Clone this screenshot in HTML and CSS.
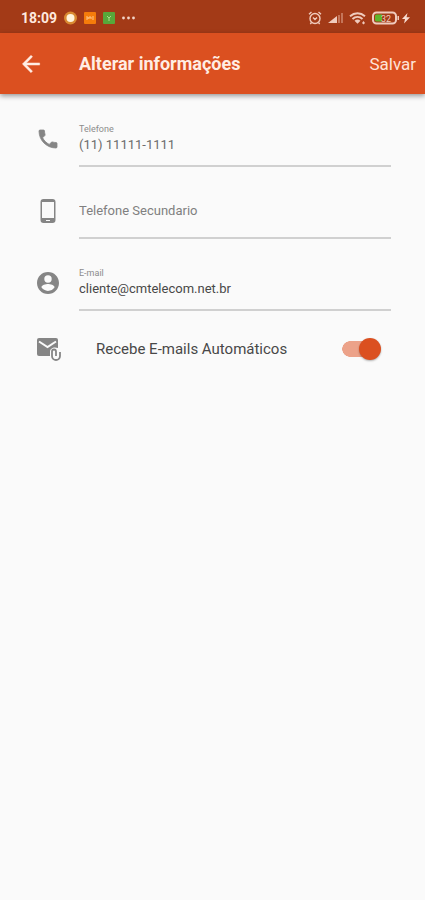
FILE: index.html
```html
<!DOCTYPE html>
<html lang="pt-BR">
<head>
<meta charset="utf-8">
<meta name="viewport" content="width=device-width, initial-scale=1">
<title>Alterar informações</title>
<link rel="stylesheet" href="styles.css">
</head>
<body>
<div class="status">
  <div class="status-group">
    <span class="clock">18:09</span>
    <svg width="13" height="14" viewBox="0 0 13 14"><circle cx="6.500" cy="7" r="6.500" fill="#d98a32"/><circle cx="6.500" cy="7" r="4" fill="#fff3dc"/></svg>
    <svg width="12" height="12" viewBox="0 0 12 12"><rect width="12" height="12" rx="1" fill="#f57c0a"/><path d="M2 5h2v2H2M5 7V5h2v2M8 5h2M8 7h2" fill="none" stroke="#ffc58a"/></svg>
    <svg width="12" height="12" viewBox="0 0 12 12"><rect width="12" height="12" rx="1" fill="#57a83a"/><path d="M4 4l2 2 2-2M6 6v3" fill="none" stroke="#a9dc8c"/></svg>
    <svg width="16" height="12" viewBox="0 0 16 12" fill="#f3d5c9"><circle cx="1.500" cy="6" r="1.400"/><circle cx="6.500" cy="6" r="1.400"/><circle cx="11.500" cy="6" r="1.400"/></svg>
  </div>
  <div class="status-group status-right">
    <svg width="14" height="14" viewBox="0 0 14 14" fill="none" stroke="#f0cbbd" stroke-width="1.400"><circle cx="7" cy="7.500" r="5"/><path d="M1 3.200L3.500 1M13 3.200L10.500 1M5 6.500l2 2 2-2M3.500 11.500l-1.200 1.500M10.500 11.500l1.200 1.500"/></svg>
    <svg width="17" height="14" viewBox="0 0 17 14"><path d="M1 12l9-7v7z" fill="#f0cbbd"/><path d="M11 12V4h2v8zM14 12V2h2v10z" fill="#c57559"/></svg>
    <svg width="18" height="14" viewBox="0 0 18 14" fill="none" stroke="#f0cbbd" stroke-width="2"><path d="M1 5.200c4.500-4 10.500-4 15 0M3.500 7.900c3-2.700 7-2.700 10 0"/><path d="M5.500 9.700c2-1.600 4-1.600 6 0l-3 3z" fill="#f0cbbd" stroke="none"/><path d="M13 12l1.500-2 1.500 2-1.500 1.500z" fill="#f0cbbd" stroke="none"/></svg>
    <svg width="28" height="14" viewBox="0 0 28 14"><rect x="1" y="1.500" width="23" height="11" rx="3.500" fill="#a33a17" stroke="#f0cbbd" stroke-width="2"/><path d="M4.500 3.500H10v7H4.500a1.500 1.500 0 0 1-1.500-1.500V5a1.500 1.500 0 0 1 1.500-1.500z" fill="#5fb52b"/><path d="M25.500 5h1.500v4h-1.500z" fill="#f0cbbd"/><text x="9" y="10.500" class="battery-text">32</text></svg>
    <svg class="bolt" width="10" height="14" viewBox="0 0 10 14"><path d="M6.500 2L1 8h3L3 12.500 9 6.200H5.500z" fill="#f8ddd2"/></svg>
  </div>
</div>
<header class="appbar">
  <button class="back" type="button" aria-label="Voltar">
    <svg width="26" height="26" viewBox="0 0 24 24" fill="#ffede4" stroke="#ffede4" stroke-width=".4"><path d="M20 11H7.830l5.590-5.590L12 4l-8 8 8 8 1.410-1.410L7.830 13H20v-2z"/></svg>
  </button>
  <h1>Alterar informações</h1>
  <button class="save" type="submit" form="info">Salvar</button>
</header>
<main>
  <form id="info">
    <div class="row">
      <svg class="icon" viewBox="0 0 24 24"><path d="M6.620 10.790c1.440 2.830 3.760 5.140 6.590 6.590l2.200-2.200c.27-.27.67-.36 1.020-.24 1.120.37 2.330.57 3.570.57.55 0 1 .45 1 1V20c0 .55-.45 1-1 1-9.390 0-17-7.610-17-17 0-.55.45-1 1-1h3.500c.55 0 1 .45 1 1 0 1.250.2 2.450.57 3.570.11.35.03.74-.25 1.020l-2.200 2.200z" stroke="#858585" stroke-width=".8"/></svg>
      <div class="field">
        <label for="tel">Telefone</label>
        <input class="muted" id="tel" type="tel" value="(11) 11111-1111">
      </div>
    </div>
    <div class="row">
      <svg class="icon" viewBox="0 0 24 24"><path d="M16.500 0h-9A3 3 0 0 0 4.500 3v18a3 3 0 0 0 3 3h9a3 3 0 0 0 3-3V3a3 3 0 0 0-3-3zM14 22h-4v-1h4v1zm4-3H6V3h12v16z"/></svg>
      <div class="field">
        <input id="tel2" type="tel" placeholder="Telefone Secundario" aria-label="Telefone Secundario">
      </div>
    </div>
    <div class="row">
      <svg class="icon" viewBox="0 0 24 24"><path d="M12 1C5.900 1 1 5.900 1 12s4.900 11 11 11 11-4.900 11-11S18.100 1 12 1zm0 3.300a3.700 3.700 0 1 1 0 7.400 3.700 3.700 0 0 1 0-7.400zm0 15.600c-2.750 0-5.180-1.400-6.600-3.540.03-2.190 4.400-3.390 6.600-3.390s6.570 1.200 6.600 3.390A7.920 7.920 0 0 1 12 19.900z"/></svg>
      <div class="field">
        <label for="mail">E-mail</label>
        <input id="mail" type="email" value="cliente@cmtelecom.net.br">
      </div>
    </div>
    <div class="row toggle">
      <svg class="icon wide" viewBox="0 0 26 24"><path d="M3 1h17a2 2 0 0 1 2 2v8c-4-1.500-8 0-8 4v4H3a2 2 0 0 1-2-2V3a2 2 0 0 1 2-2z"/><path d="M3 4.500l8.500 5.500L20 4.500" fill="none" stroke="#fafafa" stroke-width="2"/><path d="M20 19v-4.500a2 2 0 0 0-4 0V19a4 4 0 0 0 8 0v-4" fill="none" stroke="#858585" stroke-width="1.800"/></svg>
      <label for="auto">Recebe E-mails Automáticos</label>
      <input id="auto" type="checkbox" role="switch" checked>
    </div>
  </form>
</main>
</body>
</html>
```
FILE: styles.css
```css
* { box-sizing: border-box; }

body {
  margin: 0;
  min-height: 100vh;
  background: #fafafa;
  color: #484848;
  font-family: Roboto, "Liberation Sans", sans-serif;
}

button, input { font: inherit; }

.status {
  display: flex;
  justify-content: space-between;
  align-items: center;
  height: 33px;
  padding: 3px 14px 0 21px;
  background: #a33a17;
}

.status-group {
  display: flex;
  align-items: center;
  gap: 7px;
}

.status-right { gap: 5px; }

.bolt { margin-left: -4px; }

.clock {
  color: #ffe9df;
  font-size: 14px;
  font-weight: 700;
}

.battery-text {
  fill: #f0cbbd;
  font-size: 9px;
}

.appbar {
  display: flex;
  align-items: center;
  height: 61px;
  padding: 0 9px 0 18px;
  background: #db5020;
  box-shadow: 0 2px 5px rgba(0, 0, 0, 0.4);
}

.appbar button {
  padding: 0;
  border: 0;
  background: none;
  color: #ffe4d8;
}

.back {
  display: flex;
  width: 61px;
}

h1 {
  flex: 1;
  margin: 0;
  color: #ffede4;
  font-size: 18px;
  font-weight: 700;
}

.appbar .save { font-size: 17px; }

main { padding: 17px 34px 0 36px; }

form {
  display: flex;
  flex-direction: column;
  gap: 16px;
}

.row {
  display: flex;
  align-items: center;
  gap: 19px;
}

.icon {
  flex: none;
  width: 24px;
  height: 24px;
  fill: #858585;
}

.icon.wide { width: 26px; }

.field {
  display: flex;
  flex: 1;
  flex-direction: column;
  justify-content: center;
  height: 56px;
  border-bottom: 2px solid #d0d0d0;
}

.field label {
  padding-top: 2px;
  color: #8c8c8c;
  font-size: 9px;
  line-height: 10px;
}

.field input {
  width: 100%;
  height: 20px;
  padding: 0;
  border: 0;
  outline: 0;
  background: none;
  color: #484848;
  font-size: 13px;
}

.field input.muted { color: #6c6c6c; }

.field input::placeholder {
  color: #808080;
  opacity: 1;
}

.toggle {
  gap: 34px;
  padding: 10px 10px 0 0;
}

.toggle label {
  flex: 1;
  font-size: 15px;
}

.toggle input {
  display: flex;
  align-items: center;
  justify-content: flex-end;
  width: 39px;
  height: 22px;
  margin: 0;
  appearance: none;
  background:
    radial-gradient(circle closest-side, #eca289 94%, transparent) left center / 16px 16px no-repeat,
    linear-gradient(#eca289, #eca289) 8px center / 20px 16px no-repeat;
}

.toggle input::before {
  content: "";
  width: 22px;
  height: 22px;
  border-radius: 50%;
  background: #db5020;
  box-shadow: 0 1px 2px rgba(0, 0, 0, 0.3);
}
```
